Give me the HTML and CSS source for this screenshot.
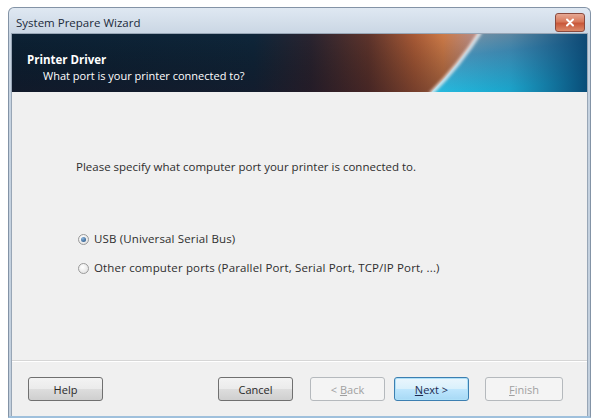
FILE: index.html
```html
<!DOCTYPE html>
<html>
<head>
<meta charset="utf-8">
<link rel="stylesheet" href="styles.css">
</head>
<body>
<div class="window">
  <div class="titlebar">
    <span class="title">System Prepare Wizard</span>
    <button class="close" aria-label="Close">
      <svg width="10" height="9" viewBox="0 0 10 9"><path d="M2 1.5 L8 7.5 M8 1.5 L2 7.5" stroke="#fff" stroke-width="2" stroke-linecap="round"/></svg>
    </button>
  </div>
  <div class="client">
    <div class="header">
      <svg class="banner" viewBox="0 0 577 59" preserveAspectRatio="none">
        <defs>
          <linearGradient id="base" x1="0" y1="0" x2="1" y2="0">
            <stop offset="0" stop-color="#0c2134"/>
            <stop offset="0.42" stop-color="#0f263a"/>
            <stop offset="0.52" stop-color="#2a2430"/>
            <stop offset="0.62" stop-color="#5e342c"/>
            <stop offset="0.7" stop-color="#a85a36"/>
            <stop offset="0.75" stop-color="#cc7a48"/>
            <stop offset="0.8" stop-color="#b88a80"/>
          </linearGradient>
          <linearGradient id="vshade" x1="0" y1="0" x2="0" y2="1">
            <stop offset="0" stop-color="#000" stop-opacity="0"/>
            <stop offset="1" stop-color="#1a0c18" stop-opacity="0.35"/>
          </linearGradient>
          <linearGradient id="right" x1="0" y1="0" x2="0.3" y2="1">
            <stop offset="0" stop-color="#8e9ca8"/>
            <stop offset="0.4" stop-color="#4c98be"/>
            <stop offset="1" stop-color="#22c0e4"/>
          </linearGradient>
          <linearGradient id="rdark" x1="0" y1="0" x2="1" y2="0">
            <stop offset="0" stop-color="#0a4a78" stop-opacity="0"/>
            <stop offset="0.5" stop-color="#0a4a78" stop-opacity="0.25"/>
            <stop offset="1" stop-color="#06406c" stop-opacity="0.9"/>
          </linearGradient>
          <radialGradient id="mauve" cx="0.5" cy="1" r="0.6">
            <stop offset="0" stop-color="#c8a2b0" stop-opacity="0.9"/>
            <stop offset="1" stop-color="#c8a2b0" stop-opacity="0"/>
          </radialGradient>
          <filter id="blur"><feGaussianBlur stdDeviation="1.5"/></filter>
        </defs>
        <rect width="577" height="59" fill="url(#base)"/>
        <rect width="577" height="59" fill="url(#vshade)"/>
        <ellipse cx="428" cy="62" rx="42" ry="30" fill="url(#mauve)"/>
        <path d="M468 0 Q 448 32 421 59 L577 59 L577 0 Z" fill="url(#right)"/>
        <path d="M468 0 Q 448 32 421 59 L577 59 L577 0 Z" fill="url(#rdark)"/>
        <path d="M470 -2 Q 449 32 420 61" stroke="#f4f0f0" stroke-width="4" fill="none" opacity="0.85" filter="url(#blur)"/>
      </svg>
      <div class="h-title">Printer Driver</div>
      <div class="h-sub">What port is your printer connected to?</div>
    </div>
    <div class="content">
      <p class="prompt">Please specify what computer port your printer is connected to.</p>
      <div class="options">
        <label class="opt"><span class="radio checked"></span>USB (Universal Serial Bus)</label>
        <label class="opt"><span class="radio"></span>Other computer ports (Parallel Port, Serial Port, TCP/IP Port, ...)</label>
      </div>
    </div>
    <div class="footer">
      <button class="btn">Help</button>
      <span class="spacer"></span>
      <button class="btn">Cancel</button>
      <button class="btn disabled">&lt; <u>B</u>ack</button>
      <button class="btn default"><u>N</u>ext &gt;</button>
      <button class="btn disabled finish"><u>F</u>inish</button>
    </div>
  </div>
</div>
</body>
</html>
```
FILE: styles.css
```css
html, body {
  margin: 0;
  padding: 0;
  background: #ffffff;
}
body {
  font-family: "Open Sans", "Noto Sans", "DejaVu Sans", sans-serif;
  font-size: 11.5px;
  color: #2e2e2e;
}
.window {
  margin: 7px 1px 0 8px;
  height: 411px;
  box-sizing: border-box;
  border: 1px solid #8393a6;
  border-bottom: 2px solid #9fc0dc;
  border-radius: 6px 6px 0 0;
  background: linear-gradient(#dfe8f2, #c6d3e1 30px, #c2cfdd);
  padding: 0 2px 0 2px;
  display: flex;
  flex-direction: column;
}
.titlebar {
  height: 25px;
  display: flex;
  align-items: center;
  justify-content: space-between;
  padding: 0 3px 0 5px;
}
.title {
  color: #1b2a3a;
  font-size: 11.5px;
  padding-top: 4px;
}
.close {
  width: 30px;
  height: 19px;
  margin-top: 4px;
  border: 1px solid #8a4a3e;
  border-radius: 3px;
  background: linear-gradient(#e6a894, #d87a5c 45%, #c9583a 55%, #dc8a6a);
  display: flex;
  align-items: center;
  justify-content: center;
  padding: 0;
}
.client {
  flex: 1;
  display: flex;
  flex-direction: column;
  background: #f0f0f0;
  border: 1px solid #98a6b6;
  border-bottom: none;
}
.header {
  position: relative;
  height: 58px;
  box-sizing: border-box;
  padding: 18px 0 0 15px;
  color: #ffffff;
  overflow: hidden;
}
.banner {
  position: absolute;
  inset: 0;
  width: 100%;
  height: 100%;
  z-index: 0;
}
.h-title, .h-sub {
  position: relative;
  z-index: 1;
}
.h-title {
  font-weight: bold;
  font-size: 11.5px;
  line-height: 15px;
}
.h-sub {
  font-size: 11px;
  line-height: 18px;
  padding-left: 16px;
}
.content {
  flex: 1;
  padding: 67px 0 0 64px;
  border-bottom: 1px solid #d6d6d6;
}
.prompt {
  margin: 0;
  line-height: 16px;
}
.options {
  display: flex;
  flex-direction: column;
  gap: 13px;
  margin-top: 56px;
  padding-left: 2px;
}
.opt {
  display: flex;
  align-items: center;
  gap: 5px;
  line-height: 16px;
  letter-spacing: 0.15px;
}
.radio {
  width: 9px;
  height: 9px;
  border-radius: 50%;
  border: 1px solid #9a9a9a;
  background: radial-gradient(circle at 40% 35%, #ffffff, #dcdcdc);
  display: inline-block;
  position: relative;
}
.radio.checked::after {
  content: "";
  position: absolute;
  left: 2px;
  top: 2px;
  width: 5px;
  height: 5px;
  border-radius: 50%;
  background: radial-gradient(circle at 35% 30%, #8ab4dc, #1c4a7c);
}
.footer {
  height: 54px;
  display: flex;
  align-items: center;
  padding: 0 0 0 16px;
  border-top: 1px solid #ffffff;
}
.spacer {
  width: 98px;
}
.btn {
  width: 75px;
  height: 24px;
  margin-right: 17px;
  border: 1px solid #707070;
  border-radius: 3px;
  background: linear-gradient(#f3f3f3, #ebebeb 50%, #dddddd 51%, #cfcfcf);
  font-family: inherit;
  font-size: 11px;
  color: #2a2a2a;
  padding: 0;
}
.btn + .btn {
  margin-right: 9px;
}
.btn.default {
  border: 1px solid #3c7fb1;
  box-shadow: inset 0 0 0 1px #aee0f8;
  background: linear-gradient(#eaf6fd, #d9f0fc 50%, #bee6fd 51%, #a7d9f5);
  color: #1e2a50;
  margin-right: 16px;
}
.btn.disabled {
  border-color: #b5b9bd;
  background: #f4f4f4;
  color: #a0a0a0;
}
.btn.finish {
  width: 78px;
}
```
